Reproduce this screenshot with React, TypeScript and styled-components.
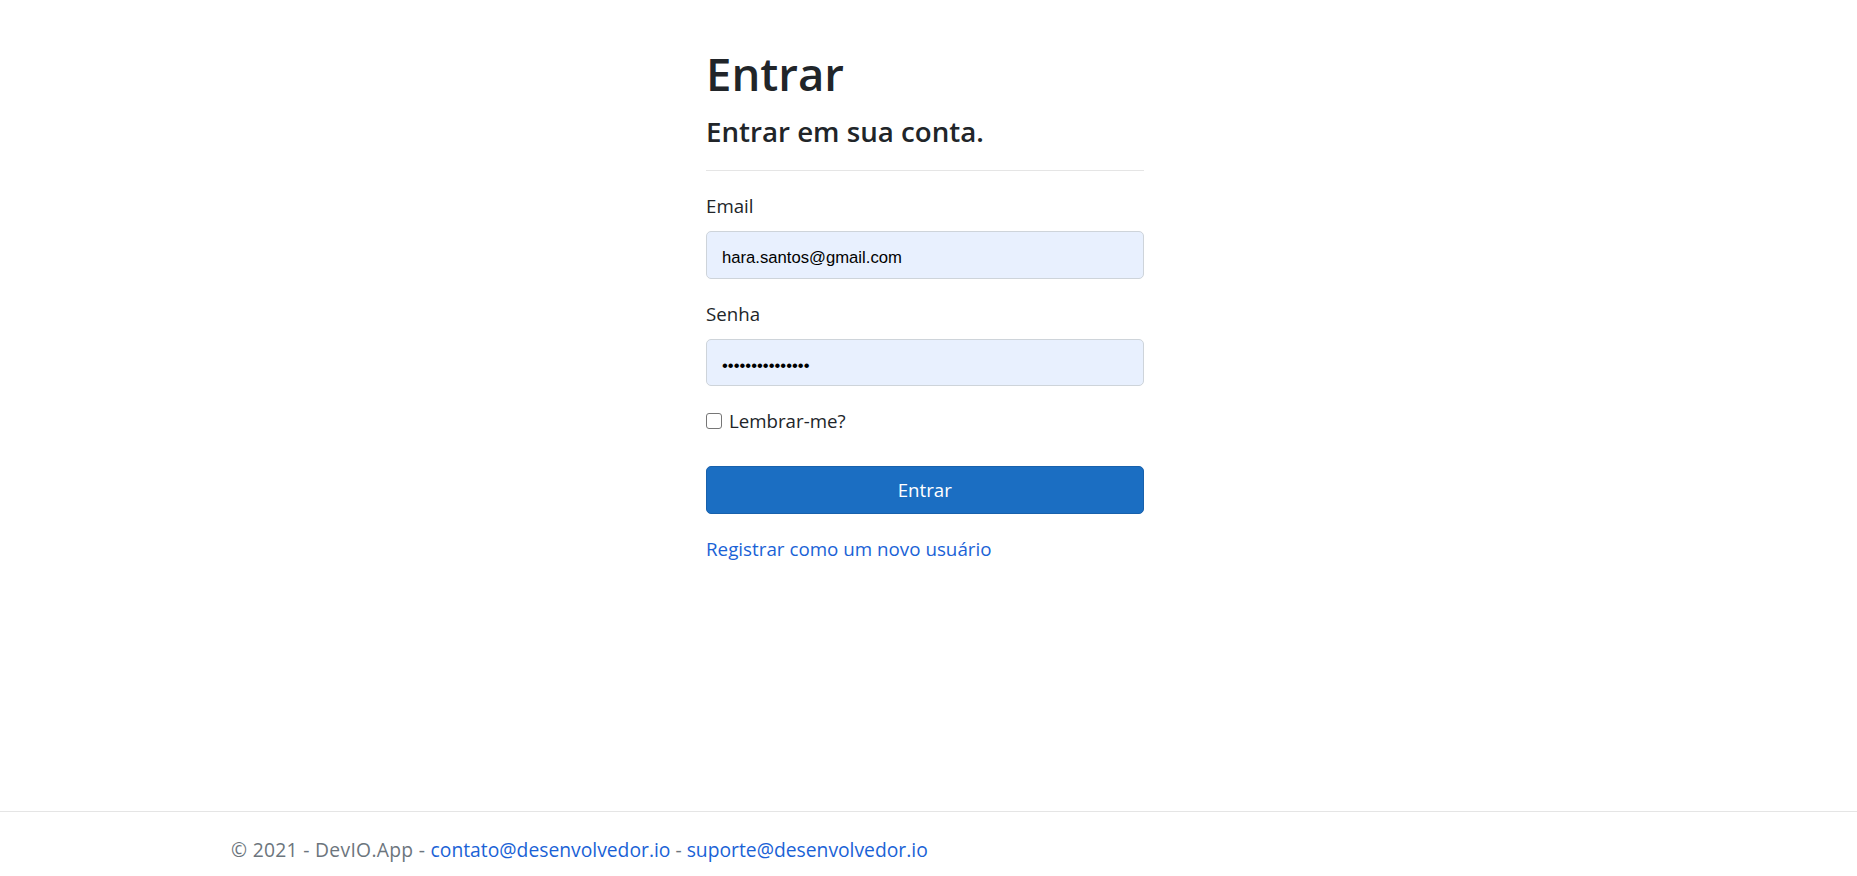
import React from "react";
import styled, { createGlobalStyle } from "styled-components";

const GlobalStyle = createGlobalStyle`
  * { box-sizing: border-box; }
  html, body { margin: 0; padding: 0; }
  body {
    font-family: "Open Sans", "Noto Sans", sans-serif;
    color: #212529;
    background: #ffffff;
  }
`;

const Page = styled.div`
  min-height: 100vh;
  display: flex;
  flex-direction: column;
`;

const Main = styled.main`
  flex: 1;
`;

const Container = styled.div`
  width: 1425px;
  margin: 0 auto;
  padding: 0 22.5px 0 15px;
`;

const FormColumn = styled.section`
  width: 437.5px;
  margin-left: 475px;
  padding-top: 43px;
`;

const Title = styled.h1`
  margin: 0 0 10px;
  font-size: 45.5px;
  font-weight: 600;
  line-height: 60px;
`;

const Subtitle = styled.h4`
  margin: 0;
  font-size: 27.7px;
  font-weight: 600;
  line-height: 36px;
`;

const Divider = styled.hr`
  margin: 21px 0 20px;
  border: 0;
  border-top: 1px solid rgba(0, 0, 0, 0.1);
  height: 0;
`;

const Field = styled.div`
  display: flex;
  flex-direction: column;
  align-items: flex-start;
  margin-bottom: 20px;
`;

const Label = styled.label`
  font-size: 18.7px;
  line-height: 30px;
  margin-bottom: 10px;
`;

const Input = styled.input`
  width: 100%;
  height: 47.5px;
  padding: 11px 15px 4px;
  border: 1.25px solid #ced4da;
  border-radius: 5px;
  background: #e8f0fe;
  color: #000000;
  font-family: "Liberation Sans", Arial, sans-serif;
  font-size: 16.67px;
  outline: none;
`;

const CheckRow = styled.label`
  display: flex;
  align-items: center;
  height: 30px;
  margin-bottom: 30px;
  font-size: 18.7px;
  line-height: 30px;
`;

const CheckBox = styled.input`
  appearance: none;
  -webkit-appearance: none;
  width: 16px;
  height: 16px;
  margin: 0 7px 0 0;
  border: 1.25px solid #767676;
  border-radius: 3px;
  background: #ffffff;
`;

const SubmitButton = styled.button`
  display: block;
  width: 100%;
  height: 47.5px;
  margin-bottom: 20px;
  border: 1.25px solid #1861ac;
  border-radius: 5px;
  background: #1b6ec2;
  color: #ffffff;
  font-family: "Open Sans", "Noto Sans", sans-serif;
  font-size: 18.7px;
  line-height: 30px;
  cursor: pointer;
`;

const LinkLine = styled.p`
  margin: 0;
  font-size: 18.8px;
  line-height: 30px;
`;

const Link = styled.a`
  color: #1a62d6;
  text-decoration: none;
`;

const Footer = styled.footer`
  height: 65px;
  border-top: 1px solid #e5e5e5;
  padding-top: 23px;
  font-size: 19.3px;
  line-height: 30px;
  color: #6c757d;
  white-space: nowrap;
`;

const Muted = styled.span`
  letter-spacing: 0.3px;
`;

export default function App() {
  return (
    <>
      <GlobalStyle />
      <Page>
        <Main>
          <Container>
            <FormColumn>
              <Title>Entrar</Title>
              <Subtitle>Entrar em sua conta.</Subtitle>
              <Divider />
              <Field>
                <Label htmlFor="email">Email</Label>
                <Input id="email" type="email" defaultValue="hara.santos@gmail.com" />
              </Field>
              <Field>
                <Label htmlFor="senha">Senha</Label>
                <Input id="senha" type="password" defaultValue="hara.santos1234" />
              </Field>
              <CheckRow>
                <CheckBox type="checkbox" />
                Lembrar-me?
              </CheckRow>
              <SubmitButton type="button">Entrar</SubmitButton>
              <LinkLine>
                <Link href="#">Registrar como um novo usuário</Link>
              </LinkLine>
            </FormColumn>
          </Container>
        </Main>
        <Footer>
          <Container>
            <Muted>© 2021 - DevIO.App - </Muted>
            <Link href="#">contato@desenvolvedor.io</Link> -{" "}
            <Link href="#">suporte@desenvolvedor.io</Link>
          </Container>
        </Footer>
      </Page>
    </>
  );
}
